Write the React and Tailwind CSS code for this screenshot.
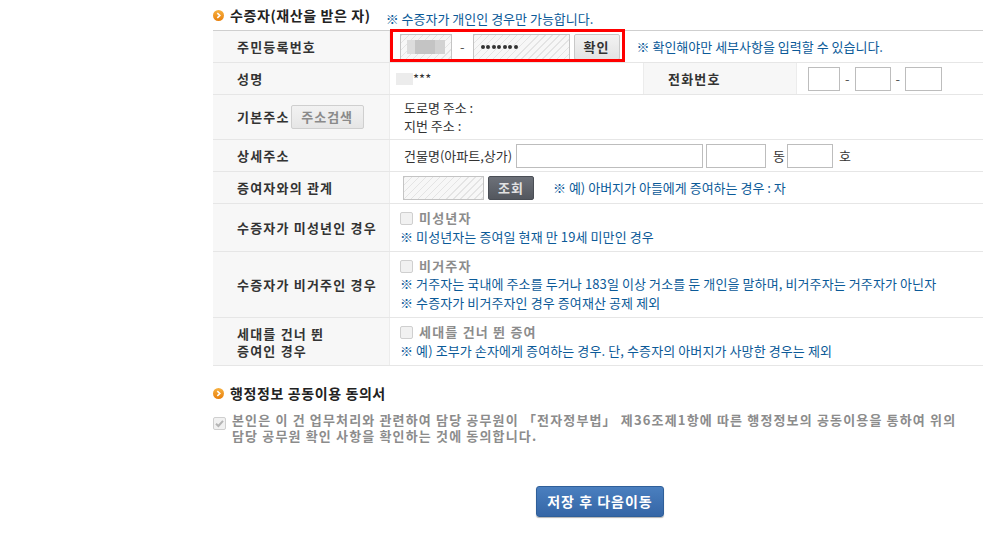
const hatch =
  'border border-[#c4c4c4] bg-[repeating-linear-gradient(135deg,#e4e4e4_0px,#e4e4e4_1px,#f7f7f7_1px,#f7f7f7_5px)]'
const plain = 'border border-[#bdbdbd] bg-white'
const note = 'text-[#0b5a98]'

function Bullet() {
  return (
    <svg width="11" height="11" viewBox="0 0 11 11" className="shrink-0">
      <defs>
        <linearGradient id="og" x1="0" y1="0" x2="0" y2="1">
          <stop offset="0" stopColor="#f7b040" />
          <stop offset="1" stopColor="#e8800c" />
        </linearGradient>
      </defs>
      <circle cx="5.5" cy="5.5" r="5.5" fill="url(#og)" />
      <path d="M4.3 3.2 L6.8 5.5 L4.3 7.8" fill="none" stroke="#fff" strokeWidth="1.6" />
    </svg>
  )
}

function Check({ checked }) {
  return (
    <span className="inline-flex h-[13px] w-[13px] shrink-0 items-center justify-center rounded-[2px] border border-[#cfcfcf] bg-[#f1f1f1]">
      {checked && (
        <svg width="11" height="11" viewBox="0 0 11 11">
          <path d="M2 5.8 L4.4 8 L9 2.8" fill="none" stroke="#b5b5b5" strokeWidth="2" />
        </svg>
      )}
    </span>
  )
}

function Label({ children, className = '' }) {
  return (
    <div className={`flex items-center bg-[#f7f7f7] pl-[24px] text-[13px] font-bold tracking-[1.2px] text-[#333] ${className}`}>
      {children}
    </div>
  )
}

function Row({ label, children, className = '', valueClass = '' }) {
  return (
    <div className={`grid grid-cols-[177px_1fr] border-b border-[#e6e6e6] ${className}`}>
      <Label className="border-r border-[#ececec]">{label}</Label>
      <div className={`flex items-center ${valueClass}`}>{children}</div>
    </div>
  )
}

function CheckRow({ label, title, notes, className = '' }) {
  return (
    <Row label={label} className={className} valueClass="pl-[10px]">
      <div className="flex flex-col text-[13px] leading-[18.5px]">
        <div className="flex items-center gap-[6px]">
          <Check />
          <span className="font-bold tracking-[1.2px] text-[#8c8c8c]">{title}</span>
        </div>
        {notes.map((n) => (
          <div key={n} className={`${note} tracking-[0.1px]`}>
            {n}
          </div>
        ))}
      </div>
    </Row>
  )
}

export default function App() {
  return (
    <div className="min-h-[539px] bg-white font-['Noto_Sans_CJK_KR','Noto_Sans',sans-serif] text-[13px] text-[#333]">
      <div className="ml-[213px] w-[770px]">
        <div className="flex h-[30px] items-end pb-[6px]">
          <div className="flex items-center gap-[6px]">
            <Bullet />
            <span className="text-[14px] font-bold leading-[18px] tracking-[0.6px] text-[#222]">수증자(재산을 받은 자)</span>
          </div>
          <span className={`ml-[15px] translate-y-[4px] leading-[18px] ${note}`}>※ 수증자가 개인인 경우만 가능합니다.</span>
        </div>

        <div className="border-t border-[#cfcfcf]">
          <Row label="주민등록번호" className="h-[32px]" valueClass="relative pl-[10px]">
            <div className="absolute left-0 top-[-2px] h-[33px] w-[235px] border-[3px] border-[#f00]" />
            <div className={`flex h-[26px] w-[52px] items-center pl-[6px] ${hatch}`}>
              <span className="h-[14px] w-[8px] bg-[#dcdcdc]" />
              <span className="h-[14px] w-[20px] bg-[#c4c4c4]" />
              <span className="h-[14px] w-[10px] bg-[#d2d2d2]" />
            </div>
            <span className="mx-[8px] text-[#555]">-</span>
            <div className={`flex h-[26px] w-[97px] items-center gap-[1.5px] pl-[7px] ${hatch}`}>
              {[0, 1, 2, 3, 4, 5, 6].map((i) => (
                <span key={i} className="h-[4px] w-[4px] rounded-full bg-[#333]" />
              ))}
            </div>
            <button className="ml-[4px] h-[26px] w-[46px] rounded-[2px] border border-[#c8c8c8] bg-[linear-gradient(#f2f2f2,#e3e3e3)] text-[13px] font-bold tracking-[1px] text-[#333]">
              확인
            </button>
            <span className={`ml-[17px] ${note}`}>※ 확인해야만 세부사항을 입력할 수 있습니다.</span>
          </Row>

          <div className="grid h-[32px] grid-cols-[177px_253px_154px_1fr] border-b border-[#e6e6e6]">
            <Label className="border-r border-[#ececec]">성명</Label>
            <div className="flex items-center pl-[6px]">
              <span className="h-[12px] w-[17px] bg-[#ececec]" />
              <span className="text-[13px]">***</span>
            </div>
            <Label className="border-l border-r border-[#ececec]">전화번호</Label>
            <div className="flex items-center pl-[11px] text-[#555]">
              <div className={`h-[24px] w-[32px] ${plain}`} />
              <span className="mx-[5px]">-</span>
              <div className={`h-[24px] w-[36px] ${plain}`} />
              <span className="mx-[5px]">-</span>
              <div className={`h-[24px] w-[37px] ${plain}`} />
            </div>
          </div>

          <Row
            label={
              <div className="flex items-center">
                기본주소
                <button className="ml-[1px] h-[24px] w-[73px] rounded-[2px] border border-[#cfcfcf] bg-[linear-gradient(#f2f2f2,#e6e6e6)] text-[13px] font-bold tracking-[1px] text-[#8a8a8a]">
                  주소검색
                </button>
              </div>
            }
            className="h-[45px]"
            valueClass="pl-[14px]"
          >
            <div className="flex flex-col leading-[18px] text-[#333]">
              <span>도로명 주소 :</span>
              <span>지번 주소 :</span>
            </div>
          </Row>

          <Row label="상세주소" className="h-[32px]" valueClass="pl-[14px]">
            <span>건물명(아파트,상가)</span>
            <div className={`ml-[4px] h-[24px] w-[187px] ${plain}`} />
            <div className={`ml-[3px] h-[24px] w-[60px] ${plain}`} />
            <span className="ml-[7px]">동</span>
            <div className={`ml-[2px] h-[24px] w-[46px] ${plain}`} />
            <span className="ml-[6px]">호</span>
          </Row>

          <Row label="증여자와의 관계" className="h-[32px]" valueClass="pl-[13px]">
            <div className={`h-[24px] w-[81px] ${hatch}`} />
            <button className="ml-[4px] h-[24px] w-[46px] rounded-[2px] border border-[#4a4e55] bg-[linear-gradient(#6d7179,#53575e)] text-[13px] font-bold tracking-[1px] text-[#e2e2e2]">
              조회
            </button>
            <span className={`ml-[19px] ${note}`}>※ 예) 아버지가 아들에게 증여하는 경우 : 자</span>
          </Row>

          <CheckRow
            label="수증자가 미성년인 경우"
            className="h-[48px]"
            title="미성년자"
            notes={['※ 미성년자는 증여일 현재 만 19세 미만인 경우']}
          />
          <CheckRow
            label="수증자가 비거주인 경우"
            className="h-[66px]"
            title="비거주자"
            notes={[
              '※ 거주자는 국내에 주소를 두거나 183일 이상 거소를 둔 개인을 말하며, 비거주자는 거주자가 아닌자',
              '※ 수증자가 비거주자인 경우 증여재산 공제 제외',
            ]}
          />
          <CheckRow
            label={
              <div className="leading-[17px]">
                세대를 건너 뛴
                <br />
                증여인 경우
              </div>
            }
            className="h-[48px] border-[#cfcfcf]"
            title="세대를 건너 뛴 증여"
            notes={['※ 예) 조부가 손자에게 증여하는 경우. 단, 수증자의 아버지가 사망한 경우는 제외']}
          />
        </div>

        <div className="mt-[18px] flex items-center gap-[6px]">
          <Bullet />
          <span className="text-[14px] font-bold leading-[18px] tracking-[0.6px] text-[#222]">행정정보 공동이용 동의서</span>
        </div>

        <div className="mt-[10px] flex gap-[6px]">
          <div className="pt-[2px]">
            <Check checked />
          </div>
          <div className="flex flex-col whitespace-nowrap text-[13px] font-bold leading-[16px] tracking-[1.15px] text-[#8c8c8c]">
            <span>본인은 이 건 업무처리와 관련하여 담당 공무원이 「전자정부법」 제36조제1항에 따른 행정정보의 공동이용을 통하여 위의</span>
            <span>담당 공무원 확인 사항을 확인하는 것에 동의합니다.</span>
          </div>
        </div>

        <div className="mt-[42px] flex justify-center">
          <button className="ml-[4px] h-[31px] w-[128px] rounded-[3px] border border-[#2f5f99] bg-[linear-gradient(#4a7fbf,#3566a6)] text-[14px] font-bold tracking-[1px] text-white shadow-[0_1px_1px_rgba(0,0,0,0.3)]">
            저장 후 다음이동
          </button>
        </div>
      </div>
    </div>
  )
}
